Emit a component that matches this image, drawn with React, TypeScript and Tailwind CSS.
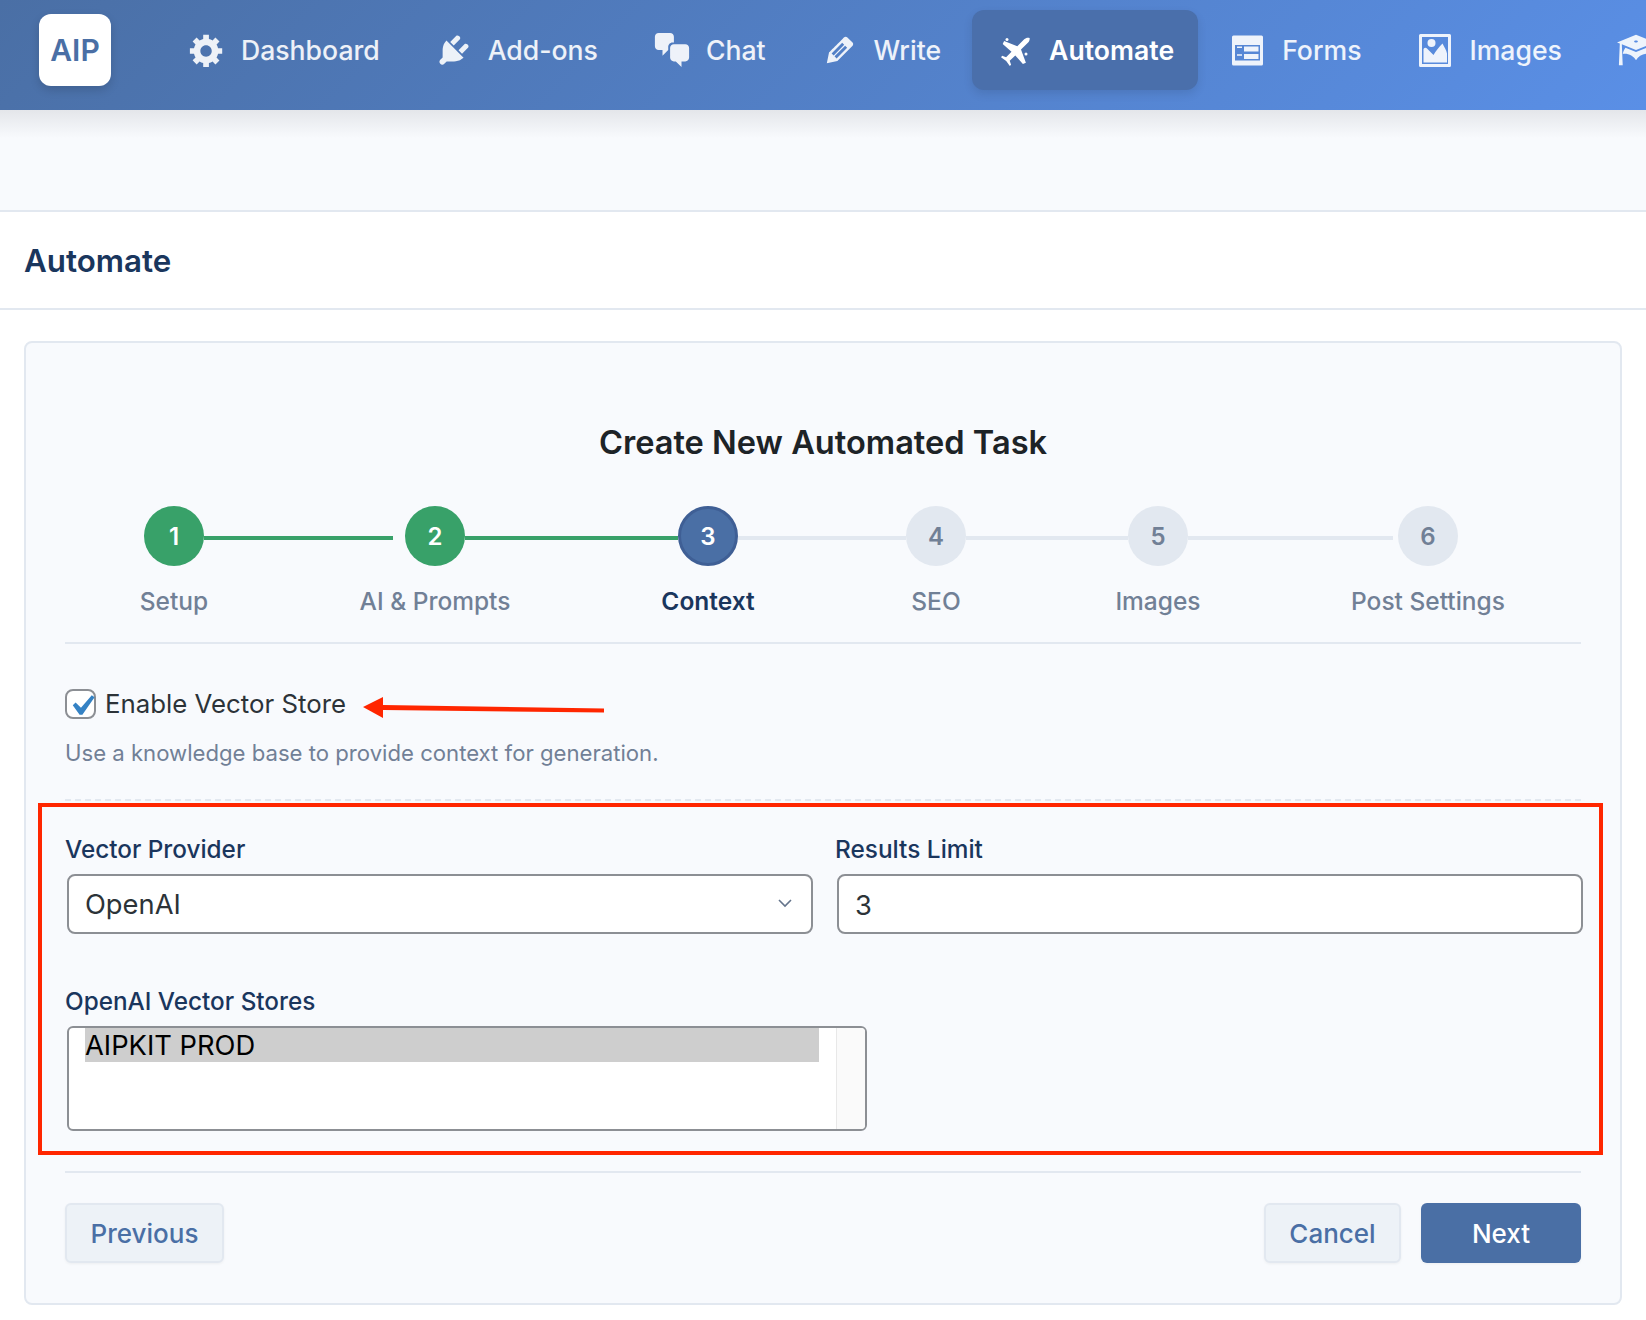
const GEAR = "M18 12h-2.18c-.17.7-.44 1.35-.81 1.93l1.54 1.54-2.1 2.1-1.54-1.54c-.58.36-1.23.63-1.91.79V19H8v-2.18c-.68-.16-1.33-.43-1.91-.79l-1.54 1.54-2.12-2.12 1.54-1.54c-.36-.58-.63-1.23-.79-1.91H1V9.03h2.17c.16-.7.44-1.35.8-1.94L2.43 5.55l2.1-2.1 1.54 1.54c.58-.37 1.24-.64 1.93-.81V2h3v2.18c.68.16 1.33.43 1.91.79l1.54-1.54 2.12 2.12-1.54 1.54c.36.59.64 1.24.8 1.94H18V12zm-8.5 1.5c1.66 0 3-1.34 3-3s-1.34-3-3-3-3 1.34-3 3 1.34 3 3 3z";
const PLUG = "M13.11 4.36L9.87 7.6 8 5.73l3.24-3.24c.35-.34 1.05-.2 1.56.32.52.51.66 1.21.31 1.55zm-8 1.77l.91-1.12 9.01 9.01-1.19.84c-.71.71-2.63 1.16-3.82 1.16H6.14L4.9 17.26c-.59.59-1.54.59-2.12 0-.59-.58-.59-1.53 0-2.12l1.24-1.24v-3.88c0-1.13.4-3.19 1.09-3.89zm7.26 3.97l3.24-3.24c.34-.35 1.04-.21 1.55.31.52.51.66 1.21.31 1.55l-3.24 3.25z";
const CHAT = "M11 6h-.82C9.07 6 8 7.2 8 8.16V10l-3 3v-3H3c-1.1 0-2-.9-2-2V3c0-1.1.9-2 2-2h6c1.1 0 2 .9 2 2v3zm0 1h6c1.1 0 2 .9 2 2v5c0 1.1-.9 2-2 2h-2v3l-3-3h-1c-1.1 0-2-.9-2-2V9c0-1.1.9-2 2-2z";
const EDIT = "M13.89 3.39l2.71 2.72c.46.46.42 1.24.03 1.64l-8.01 8.02-5.56 1.16 1.16-5.58s7.6-7.63 7.99-8.03c.39-.39 1.22-.39 1.68.07zm-2.73 2.79l-5.59 5.61 1.11 1.11 5.54-5.65zm-2.97 8.23l5.58-5.6-1.07-1.08-5.59 5.6z";
const CAP = "M10 10L2.54 7.02 3 18H1l.48-11.41L0 6l10-4 10 4zm0-5c-.55 0-1 .22-1 .5s.45.5 1 .5 1-.22 1-.5-.45-.5-1-.5zm0 6l5.57-2.23c.71.94 1.2 2.07 1.36 3.3-.3-.04-.61-.07-.93-.07-2.55 0-4.78 1.37-6 3.41C8.78 13.37 6.55 12 4 12c-.32 0-.63.03-.93.07.16-1.23.65-2.36 1.36-3.3z";

function DashIcon({ d }: { d: string }) {
  return (
    <svg viewBox="0 0 20 20" className="w-[38px] h-[38px] shrink-0 fill-current">
      <path d={d} />
    </svg>
  );
}

function PlaneIcon() {
  return (
    <svg viewBox="5 6 38 38" className="w-[38px] h-[38px] shrink-0 fill-current">
      <path d="M38.5 12.5c.6 1.8-.2 3.9-1.6 5.3L30 24.5l4.9 13.2-3 1.3-7.6-8.6-5.6 5.3 1.4 4-1.3 1.2-3.6-5-5.2-3.7 1.2-1.4 3.9 1.5 5.4-5.6-8.8-7.7 1.4-3 13.2 5.2 6.9-6.9c1.4-1.3 3.5-2 5.3-1.3z" />
      <circle cx="16" cy="14.5" r="1.5" />
      <circle cx="35" cy="29" r="1.5" />
    </svg>
  );
}

function FormsIcon() {
  return (
    <svg viewBox="5 6 38 38" className="w-[38px] h-[38px] shrink-0 fill-current">
      <path
        fillRule="evenodd"
        d="M9.5 10.5h28a1.5 1.5 0 0 1 1.5 1.5v27a1.5 1.5 0 0 1-1.5 1.5h-28A1.5 1.5 0 0 1 8 39V12a1.5 1.5 0 0 1 1.5-1.5zM11 20v15.5h25V20z"
      />
      <path d="M13 21.5h5V23h-5zM20 21.5h14.5v5H20zM13 29.3h5v1.5h-5zM20 29h14.5v5H20z" />
    </svg>
  );
}

function ImageIcon() {
  return (
    <svg viewBox="5 6 38 38" className="w-[38px] h-[38px] shrink-0 fill-current">
      <path
        fillRule="evenodd"
        d="M9.5 9h29a1.5 1.5 0 0 1 1.5 1.5v30a1.5 1.5 0 0 1-1.5 1.5h-29A1.5 1.5 0 0 1 8 40.5v-30A1.5 1.5 0 0 1 9.5 9zm1.5 3v27h26V12z"
      />
      <circle cx="20.5" cy="18" r="4" />
      <path d="M12.5 37.5V24c1-1.5 2.5-1.5 3.5-.5l6.5 6.5c2-3.5 5-7.5 9-11.5 1.5 3 4 7 4.5 10v9z" />
    </svg>
  );
}

const navItems = [
  { label: "Dashboard", icon: <DashIcon d={GEAR} /> },
  { label: "Add-ons", icon: <DashIcon d={PLUG} /> },
  { label: "Chat", icon: <DashIcon d={CHAT} /> },
  { label: "Write", icon: <DashIcon d={EDIT} /> },
  { label: "Automate", icon: <PlaneIcon />, active: true },
  { label: "Forms", icon: <FormsIcon /> },
  { label: "Images", icon: <ImageIcon /> },
  // last one runs off the right edge, only its icon is on screen
  { label: "", icon: <DashIcon d={CAP} /> },
];

function Step({ n, label, state }: { n: number; label: string; state: "done" | "active" | "todo" }) {
  const circle =
    state === "done"
      ? "bg-[#38a169] text-white"
      : state === "active"
        ? "bg-[#4a6fa5] text-white border-[3px] border-[#3f5f95]"
        : "bg-[#e2e8f0] text-[#718096]";
  return (
    <div className="w-[60px] shrink-0 flex flex-col items-center">
      <div className={`w-[60px] h-[60px] shrink-0 pt-px rounded-full flex items-center justify-center text-[24px] font-semibold ${circle}`}>
        {n}
      </div>
      <div
        className={`mt-[19px] text-[24.5px] leading-[32px] whitespace-nowrap ${
          state === "active" ? "font-semibold text-[#1a365d]" : "font-medium text-[#718096]"
        }`}
      >
        {label}
      </div>
    </div>
  );
}

function Line({ w, done, gap }: { w: string; done?: boolean; gap?: string }) {
  return <div className={`h-1 mt-[30px] shrink-0 ${w} ${gap ?? ""} ${done ? "bg-[#38a169]" : "bg-[#e2e8f0]"}`} />;
}

export default function App() {
  return (
    <div className="w-[1646px] h-[1320px] overflow-hidden bg-white font-['Inter',sans-serif]">
      {/* top nav */}
      <div className="relative z-10 h-[110px] pb-[10px] pl-[39px] flex items-center overflow-hidden bg-[linear-gradient(135deg,#4a6fa5,#5a8fe6)]">
        <div className="w-[72px] h-[72px] shrink-0 pt-px rounded-[12px] bg-white shadow-[0_4px_10px_rgba(0,0,0,0.15)] flex items-center justify-center text-[30px] font-semibold text-[#4a6fa5]">
          AIP
        </div>
        <div className="ml-[53px] flex items-center gap-[7px]">
          {navItems.map((item, i) => (
            <div
              key={i}
              className={`h-[80px] px-6 flex items-center gap-[15px] shrink-0 rounded-[12px] text-[26.6px] whitespace-nowrap ${
                item.active
                  ? "bg-[#4a6fab] text-white font-semibold shadow-[0_4px_10px_rgba(0,0,0,0.1)]"
                  : "text-white/90 font-medium"
              }`}
            >
              {item.icon}
              <span className="pt-[2px]">{item.label}</span>
            </div>
          ))}
        </div>
      </div>

      <div className="h-[102px] border-b-2 border-[#e2e8f0] bg-[linear-gradient(180deg,#e4e6ea,#f8fafd_28px)]" />

      <div className="h-[98px] pt-[2px] border-b-2 border-[#e2e8f0] bg-white pl-6 flex items-center">
        <h1 className="text-[31.3px] font-semibold text-[#1a365d]">Automate</h1>
      </div>

      {/* wizard card */}
      <div className="mx-6 mt-[31px] h-[964px] rounded-[8px] border-2 border-[#e2e8f0] bg-[#f8fafd] px-[39px] pt-[79px]">
        <h2 className="text-center text-[32.6px] leading-[40px] font-semibold text-[#1d2327]">Create New Automated Task</h2>

        <div className="mt-[44px] pl-[79px] flex items-start">
          <Step n={1} label="Setup" state="done" />
          <Line w="w-[189px]" gap="mr-[12px]" done />
          <Step n={2} label="AI & Prompts" state="done" />
          <Line w="w-[213px]" done />
          <Step n={3} label="Context" state="active" />
          <Line w="w-[168px]" />
          <Step n={4} label="SEO" state="todo" />
          <Line w="w-[162px]" />
          <Step n={5} label="Images" state="todo" />
          <Line w="w-[205px]" gap="mr-[5px]" />
          <Step n={6} label="Post Settings" state="todo" />
        </div>

        <div className="mt-[25px] border-b-2 border-[#e2e8f0]" />

        <div className="relative mt-[45px] flex items-center h-[30px]">
          <span className="w-[31px] h-[30px] rounded-[8px] border-2 border-[#8c8f94] bg-white">
            <svg viewBox="2.55 1.93 14.3 14.3" className="w-[30px] h-[30px] fill-[#3582c4] overflow-visible -translate-x-[1px] -translate-y-[2px]">
              <path d="M14.83 4.89l1.34.94-5.81 8.38H9.02L5.78 9.67l1.34-1.25 2.57 2.4z" />
            </svg>
          </span>
          <span className="ml-[9px] pt-px text-[25.8px] text-[#2c3338]">Enable Vector Store</span>
          {/* annotation arrow */}
          <svg width="242" height="24" viewBox="0 0 242 24" className="absolute left-[298px] top-[7px]">
            <path d="M0 11 20 1v8l221 3.5v4L20 14v8z" fill="#ff2600" />
          </svg>
        </div>

        <p className="mt-[19px] text-[22.15px] leading-[30px] text-[#718096]">Use a knowledge base to provide context for generation.</p>

        <div className="mt-[31px] border-b-2 border-dashed border-[#e2e8f0]" />

        <div className="relative pt-[32px]">
          {/* red annotation frame */}
          <div className="absolute -left-[27px] -right-[22px] top-[2px] h-[352px] border-4 border-[#ff2600]" />
          <div className="grid grid-cols-2 gap-x-[24px]">
            <div>
              <label className="block text-[24.3px] leading-[32px] font-medium text-[#1a365d]">Vector Provider</label>
              <div className="relative mt-[9px] ml-[2px] w-[746px]">
                <select
                  defaultValue="openai"
                  className="block w-full h-[60px] pt-[2px] appearance-none rounded-[8px] border-2 border-[#8c8f94] bg-white pl-4 text-[27.3px] text-[#2c3338]"
                >
                  <option value="openai">OpenAI</option>
                </select>
                <svg viewBox="0 0 14 9" className="absolute right-[21px] top-[25px] w-[14px] h-[9px] fill-none stroke-[#64748b] stroke-[1.6]">
                  <path d="M1 1l6 6 6-6" />
                </svg>
              </div>
            </div>
            <div>
              <label className="block text-[24.4px] leading-[32px] font-medium text-[#1a365d]">Results Limit</label>
              <input
                type="text"
                defaultValue="3"
                className="block mt-[9px] ml-[2px] w-[746px] h-[60px] pt-[2px] rounded-[8px] border-2 border-[#8c8f94] bg-white pl-4 text-[27.3px] text-[#2c3338]"
              />
            </div>
          </div>

          <label className="block mt-[51px] text-[24.3px] leading-[32px] font-medium text-[#1a365d]">OpenAI Vector Stores</label>
          <div className="mt-[9px] ml-[2px] w-[800px] h-[105px] flex rounded-[6px] border-2 border-[#8c8f94] bg-white overflow-hidden">
            <div className="flex-1 pl-[16px] pr-[17px]">
              <div className="h-[34px] pt-px bg-[#cecece] text-[27.3px] leading-[34px] text-black">AIPKIT PROD</div>
            </div>
            <div className="w-[29px] h-full bg-[#fafafa] border-l border-[#e8e8e8]" />
          </div>
        </div>

        <div className="mt-[40px] border-b-2 border-[#e2e8f0]" />

        <div className="mt-[30px] flex">
          <button className="w-[159px] h-[60px] rounded-[6px] border-2 border-[#e2e8f0] bg-[#edf2f7] shadow-[0_1px_3px_rgba(0,0,0,0.05)] text-[26px] font-medium text-[#4a6fa5]">
            Previous
          </button>
          <button className="ml-auto w-[137px] h-[60px] rounded-[6px] border-2 border-[#e2e8f0] bg-[#edf2f7] shadow-[0_1px_3px_rgba(0,0,0,0.05)] text-[26px] font-medium text-[#4a6fa5]">
            Cancel
          </button>
          <button className="ml-[20px] w-[160px] h-[60px] rounded-[6px] bg-[#4a6fa5] shadow-[0_1px_3px_rgba(0,0,0,0.05)] text-[26px] font-medium text-white">
            Next
          </button>
        </div>
      </div>
    </div>
  );
}
